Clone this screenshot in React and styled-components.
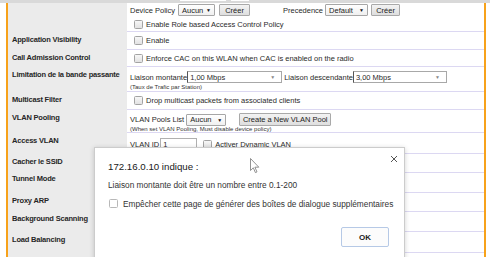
import React from "react"
import styled, { createGlobalStyle } from "styled-components"

const GlobalStyle = createGlobalStyle`
  body {
    margin: 0;
    background: #fff;
    font-family: "Liberation Sans", Arial, sans-serif;
    color: #222;
  }
`

const ORANGE = "#f7a21b"

const Page = styled.div`
  position: relative;
  width: 490px;
  height: 257px;
  overflow: hidden;
`

const TopStrip = styled.div`
  height: 3px;
  background: #d9d9d9;
  display: flex;
  padding-left: 180px;
  gap: 5px;
`

const StubBox = styled.div`
  width: ${p => p.$w}px;
  height: 1px;
  background: #fff;
`

const Frame = styled.div`
  margin-left: 6px;
  width: 480px;
  box-sizing: border-box;
  border-left: 2px solid ${ORANGE};
  border-right: 2px solid ${ORANGE};
  display: flex;
  flex-direction: column;
`

const Row = styled.div`
  display: grid;
  grid-template-columns: 119px 1fr;
  height: ${p => p.$h}px;
`

const Label = styled.div`
  background: #ebebeb;
  font-size: 7.5px;
  font-weight: bold;
  line-height: 10px;
  padding: ${p => 3 + (p.$shift || 0)}px 0 0 4px;
  letter-spacing: -0.2px;
  white-space: nowrap;
  color: #262626;
`

const Value = styled.div`
  border-bottom: 1px solid #dcd8f2;
  box-sizing: border-box;
  padding: ${p => p.$pt || 0}px 0 0 3px;
  display: flex;
  flex-direction: column;
  font-size: 7.5px;
  color: #2a2a2a;
  white-space: nowrap;
`

const Line = styled.div`
  display: flex;
  align-items: center;
  height: ${p => p.$h}px;
`

const Small = styled.div`
  font-size: 6px;
  line-height: ${p => p.$h}px;
  color: #333;
`

const Check = styled.span`
  display: inline-block;
  width: 9px;
  height: 9px;
  box-sizing: border-box;
  border: 1px solid #a3a3a3;
  border-radius: 1.5px;
  background: linear-gradient(#f7f7f7, #e2e2e2);
  margin: 0 3px 0 ${p => (p.$ml ?? 4)}px;
  flex: none;
`

const Select = styled.div`
  width: ${p => p.$w}px;
  height: 12px;
  box-sizing: border-box;
  margin-left: ${p => p.$ml || 0}px;
  border: 1px solid #a6a6a6;
  border-radius: 1px;
  background: linear-gradient(#ffffff, #f0f0f0);
  display: flex;
  align-items: center;
  justify-content: space-between;
  padding: 0 3px;
  font-size: 7.5px;
  color: #222;
`

const Arrow = styled.span`
  font-size: 5px;
  color: ${p => p.$c || "#111"};
`

const Button = styled.div`
  width: ${p => p.$w}px;
  height: ${p => p.$h || 12}px;
  box-sizing: border-box;
  margin-left: ${p => p.$ml || 0}px;
  border: 1px solid #a9a9a9;
  border-radius: 1px;
  background: linear-gradient(#f3f3f3, #dedede);
  display: flex;
  align-items: center;
  justify-content: center;
  font-size: 7.5px;
  color: #222;
`

const Combo = styled.div`
  width: ${p => p.$w}px;
  height: 12px;
  box-sizing: border-box;
  border: 1px solid #a8a8a8;
  border-left-color: #555;
  background: #fff;
  display: flex;
  align-items: center;
  justify-content: space-between;
  padding: 0 6px 0 2px;
  font-size: 7.5px;
`

const TextBox = styled.div`
  width: ${p => p.$w}px;
  height: 12px;
  box-sizing: border-box;
  margin-left: ${p => p.$ml || 0}px;
  border: 1px solid #b0b0b0;
  background: #fff;
  padding-left: 2px;
  display: flex;
  align-items: center;
  font-size: 7.5px;
`

const Gap = styled.span`
  margin-left: ${p => p.$w}px;
`

/* alert box */
const Dialog = styled.div`
  position: absolute;
  left: 94px;
  top: 147px;
  width: 311px;
  height: 130px;
  box-sizing: border-box;
  background: #fff;
  border: 1px solid rgba(0, 0, 0, 0.2);
  box-shadow: 0 1px 5px rgba(0, 0, 0, 0.18);
  padding: 13px 15px 0 13px;
  display: flex;
  flex-direction: column;
  color: #222;
`

const DialogTitle = styled.div`
  font-size: 9.7px;
  line-height: 12px;
  color: #202020;
`

const DialogText = styled.div`
  margin-top: 7px;
  font-size: 8.3px;
  line-height: 10px;
  color: #333;
`

const DialogCheck = styled.div`
  margin-top: 8px;
  display: flex;
  align-items: center;
  gap: 5px;
  font-size: 8.3px;
  height: 11px;
  color: #333;
  white-space: nowrap;
  padding-left: 1px;
`

const DialogBox = styled.span`
  flex: none;
  width: 9px;
  height: 9px;
  box-sizing: border-box;
  border: 1px solid #b8b8b8;
  border-radius: 1.5px;
  background: #fff;
`

const Actions = styled.div`
  margin-top: 18px;
  display: flex;
  justify-content: flex-end;
`

const OkButton = styled.div`
  width: 48px;
  height: 20px;
  box-sizing: border-box;
  border: 1px solid #b6c9e6;
  border-radius: 2px;
  background: #fcfcfc;
  display: flex;
  align-items: center;
  justify-content: center;
  font-size: 8px;
  font-weight: bold;
  color: #222;
`

const Close = styled.svg`
  position: absolute;
  right: 6px;
  top: 7px;
`

const Cursor = styled.svg`
  position: absolute;
  left: 250px;
  top: 158px;
`

const CheckLine = ({ children, h }) => (
  <Line $h={h}>
    <Check />
    {children}
  </Line>
)

export default function App() {
  return (
    <Page>
      <GlobalStyle />
      <TopStrip>
        <StubBox $w={46} />
        <StubBox $w={18} />
      </TopStrip>
      <Frame>
        <Row $h={29}>
          <Label />
          <Value>
            <Line $h={14}>
              Device Policy
              <Select $w={37} $ml={3}>Aucun <Arrow>▼</Arrow></Select>
              <Button $w={31} $ml={4}>Créer</Button>
              <Gap $w={33} />
              Precedence
              <Select $w={43} $ml={2}>Default <Arrow>▼</Arrow></Select>
              <Button $w={29} $ml={3}>Créer</Button>
            </Line>
            <CheckLine h={14}>Enable Role based Access Control Policy</CheckLine>
          </Value>
        </Row>
        <Row $h={18}>
          <Label>Application Visibility</Label>
          <Value>
            <CheckLine h={17}>Enable</CheckLine>
          </Value>
        </Row>
        <Row $h={17}>
          <Label>Call Admission Control</Label>
          <Value>
            <CheckLine h={16}>Enforce CAC on this WLAN when CAC is enabled on the radio</CheckLine>
          </Value>
        </Row>
        <Row $h={25}>
          <Label>Limitation de la bande passante</Label>
          <Value $pt={4}>
            <Line $h={12}>
              Liaison montante
              <Combo $w={95}>1,00 Mbps <Arrow $c="#888">▼</Arrow></Combo>
              <Gap $w={2} />
              Liaison descendante
              <Combo $w={94}>3,00 Mbps <Arrow $c="#888">▼</Arrow></Combo>
            </Line>
            <Small $h={8}>(Taux de Trafic par Station)</Small>
          </Value>
        </Row>
        <Row $h={18}>
          <Label>Multicast Filter</Label>
          <Value>
            <CheckLine h={17}>Drop multicast packets from associated clients</CheckLine>
          </Value>
        </Row>
        <Row $h={23}>
          <Label>VLAN Pooling</Label>
          <Value $pt={3}>
            <Line $h={13}>
              VLAN Pools List
              <Select $w={40} $ml={2}>Aucun <Arrow>▼</Arrow></Select>
              <Button $w={92} $h={13} $ml={13}>Create a New VLAN Pool</Button>
            </Line>
            <Small $h={6}>(When set VLAN Pooling, Must disable device policy)</Small>
          </Value>
        </Row>
        <Row $h={21}>
          <Label>Access VLAN</Label>
          <Value $pt={5}>
            <Line $h={12}>
              VLAN ID
              <TextBox $w={37} $ml={1}>1</TextBox>
              <Check $ml={6} />
              Activer Dynamic VLAN
            </Line>
          </Value>
        </Row>
        <Row $h={19}>
          <Label>Cacher le SSID</Label>
          <Value />
        </Row>
        <Row $h={20}>
          <Label $shift={-2}>Tunnel Mode</Label>
          <Value />
        </Row>
        <Row $h={19}>
          <Label>Proxy ARP</Label>
          <Value />
        </Row>
        <Row $h={20}>
          <Label $shift={-1}>Background Scanning</Label>
          <Value />
        </Row>
        <Row $h={21}>
          <Label>Load Balancing</Label>
          <Value />
        </Row>
        <Row $h={20}>
          <Label />
          <Value />
        </Row>
      </Frame>

      <Dialog>
        <Close width="8" height="8" viewBox="0 0 8 8">
          <path d="M1 1 L7 7 M7 1 L1 7" stroke="#555" strokeWidth="1" />
        </Close>
        <DialogTitle>172.16.0.10 indique :</DialogTitle>
        <DialogText>Liaison montante doit être un nombre entre 0.1-200</DialogText>
        <DialogCheck>
          <DialogBox />
          Empêcher cette page de générer des boîtes de dialogue supplémentaires
        </DialogCheck>
        <Actions>
          <OkButton>OK</OkButton>
        </Actions>
      </Dialog>

      <Cursor width="10" height="16" viewBox="0 0 10 16">
        <path d="M0.5 0.5 L0.5 12.5 L3.3 9.8 L5.4 14.6 L7 13.9 L4.9 9.2 L8.8 9.2 Z" fill="#fff" stroke="#777" strokeWidth="0.8" strokeLinejoin="round" />
      </Cursor>
    </Page>
  )
}
